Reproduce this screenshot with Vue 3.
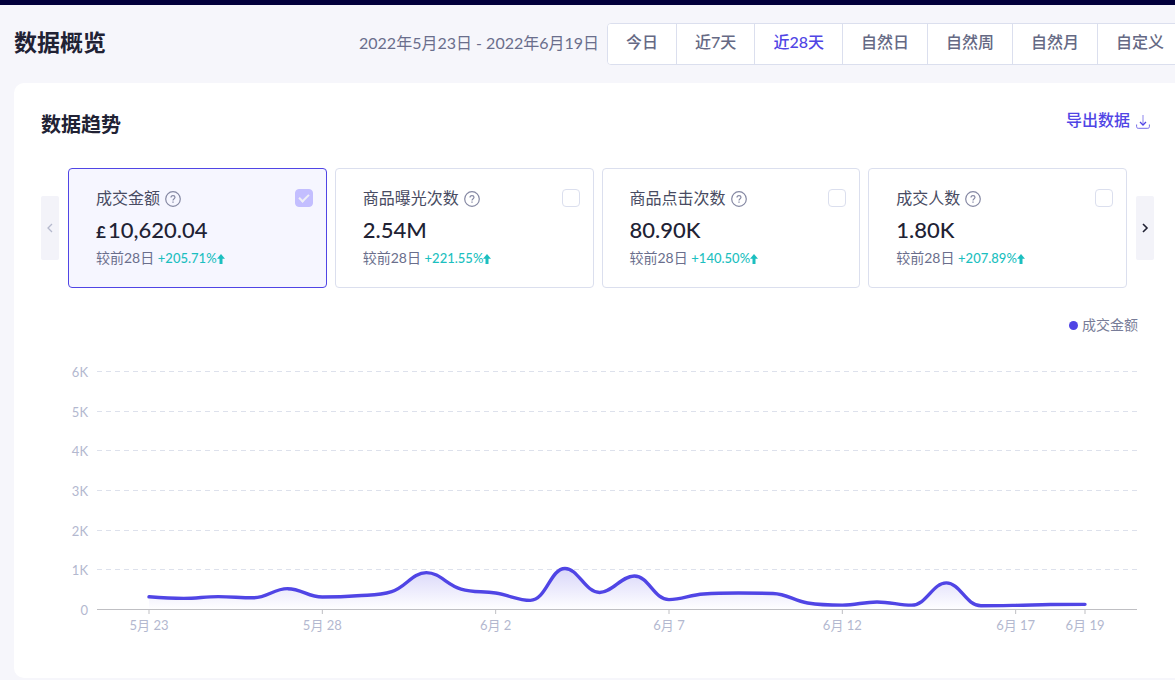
<script setup>
import { ref } from 'vue'

const ranges = ['今日', '近7天', '近28天', '自然日', '自然周', '自然月', '自定义']
const activeRange = ref('近28天')

const metrics = ref([
  { id: 'gmv', name: '成交金额', unit: '£', value: '10,620.04', change: '+205.71%', checked: true },
  { id: 'views', name: '商品曝光次数', unit: '', value: '2.54M', change: '+221.55%', checked: false },
  { id: 'clicks', name: '商品点击次数', unit: '', value: '80.90K', change: '+140.50%', checked: false },
  { id: 'buyers', name: '成交人数', unit: '', value: '1.80K', change: '+207.89%', checked: false },
])

const left = 56
const right = 1096
const base = 265
const rowStep = 119 / 3
const band = (right - left) / 30
const dayX = (i) => left + band * (i + 1.5)

const rows = [6, 5, 4, 3, 2, 1, 0].map((k) => ({
  label: k ? `${k}K` : '0',
  y: Math.round(base - k * rowStep) - 0.5,
}))

const days = [
  [0, '5月 23'], [5, '5月 28'], [10, '6月 2'], [15, '6月 7'],
  [20, '6月 12'], [25, '6月 17'], [27, '6月 19'],
].map(([i, label]) => ({ x: dayX(i), label }))

const amounts = [
  320, 280, 325, 295, 525, 315, 345, 450, 930, 515, 415, 230, 1035, 430,
  845, 250, 390, 415, 405, 165, 110, 190, 110, 670, 95, 105, 125, 130,
]

const smoothness = 0.4
const clamp = (v, a, b) => Math.max(Math.min(a, b), Math.min(Math.max(a, b), v))

function smoothPath(points) {
  let d = `M${points[0][0]} ${points[0][1]}`
  let out = points[0]
  for (let i = 1; i < points.length; i++) {
    const prev = points[i - 1]
    const p = points[i]
    const next = points[i + 1]
    let into = p
    let nextOut = p
    if (next) {
      const lenPrev = Math.hypot(p[0] - prev[0], p[1] - prev[1])
      const lenNext = Math.hypot(next[0] - p[0], next[1] - p[1])
      const ratio = lenNext / (lenNext + lenPrev)
      nextOut = [0, 1].map((k) => clamp(p[k] + (next[k] - prev[k]) * smoothness * ratio, p[k], next[k]))
      into = [0, 1].map((k) => clamp(p[k] - ((nextOut[k] - p[k]) * lenPrev) / lenNext, p[k], prev[k]))
      nextOut = [0, 1].map((k) => p[k] + ((p[k] - into[k]) * lenNext) / lenPrev)
    }
    d += `C${out[0]} ${out[1]} ${into[0]} ${into[1]} ${p[0]} ${p[1]}`
    out = nextOut
  }
  return d
}

const linePath = smoothPath(amounts.map((v, i) => [dayX(i), base - 0.5 - (v / 1000) * rowStep]))
const areaPath = `${linePath}L${dayX(27)} ${base}L${dayX(0)} ${base}Z`
</script>

<template>
  <div class="page">
    <header class="head">
      <h1>数据概览</h1>
      <span class="period">2022年5月23日 - 2022年6月19日</span>
      <div class="ranges" role="group" aria-label="日期范围">
        <button
          v-for="r in ranges"
          :key="r"
          type="button"
          :class="{ active: r === activeRange }"
          @click="activeRange = r"
        >{{ r }}</button>
      </div>
    </header>

    <main class="panel">
      <div class="panel-head">
        <h2>数据趋势</h2>
        <button type="button" class="export">
          导出数据
          <svg width="14" height="14" viewBox="0 0 14 14" fill="none" stroke="currentColor">
            <path d="M7 0v9" stroke-opacity=".65" />
            <path d="M4 7l3 3 3-3" stroke-width="1.3" />
            <path d="M.6 9.5v2.1c0 1 .6 1.7 1.7 1.7h9.4c1.1 0 1.7-.7 1.7-1.7V9.5" stroke-opacity=".8" />
          </svg>
        </button>
      </div>

      <section class="carousel">
        <button type="button" class="nav" disabled aria-label="上一页">
          <svg width="8" height="10" viewBox="0 0 8 10" fill="none" stroke="currentColor" stroke-width="1.3"><path d="M6 1L2 5l4 4" /></svg>
        </button>
        <div class="cards">
          <article v-for="m in metrics" :key="m.id" class="card" :class="{ selected: m.checked }">
            <div class="card-head">
              <label :for="m.id">{{ m.name }}</label>
              <svg class="help" width="16" height="16" viewBox="0 0 16 16" fill="none" stroke="currentColor">
                <circle cx="8" cy="8" r="7.3" stroke-width="1.2" />
                <path d="M6 6.5c0-1.2.8-1.9 2-1.9s2 .7 2 1.7c0 .8-.5 1.2-1.1 1.6-.6.4-.9.7-.9 1.5" stroke-width="1.2" />
                <path d="M8 10.5v1.2" stroke-width="1.3" />
              </svg>
              <input :id="m.id" v-model="m.checked" type="checkbox" />
            </div>
            <div class="value"><small v-if="m.unit">{{ m.unit }}</small>{{ m.value }}</div>
            <div class="compare">
              较前28日 <span>{{ m.change }}</span>
              <svg width="8" height="10" viewBox="0 0 8 10" fill="currentColor"><path d="M4 0l4 4.700H5.500V10h-3V4.700H0z" /></svg>
            </div>
          </article>
        </div>
        <button type="button" class="nav" aria-label="下一页">
          <svg width="8" height="10" viewBox="0 0 8 10" fill="none" stroke="currentColor" stroke-width="1.6"><path d="M2 1l4 4-4 4" /></svg>
        </button>
      </section>

      <div class="legend"><i></i>成交金额</div>

      <svg class="chart" viewBox="0 0 1113 292" role="img" aria-label="成交金额">
        <defs>
          <linearGradient id="fill" x1="0" y1="0" x2="0" y2="1">
            <stop offset="0" stop-color="#5045e5" stop-opacity=".22" />
            <stop offset="1" stop-color="#5045e5" stop-opacity="0" />
          </linearGradient>
        </defs>
        <g v-for="row in rows" :key="row.label">
          <text class="tick" x="47" :y="row.y + 5" text-anchor="end">{{ row.label }}</text>
          <line v-if="row.label !== '0'" class="rule" :x1="left" :x2="right" :y1="row.y" :y2="row.y" />
        </g>
        <path :d="areaPath" fill="url(#fill)" />
        <line class="axis" :x1="left" :x2="right" :y1="base - 0.5" :y2="base - 0.5" />
        <g v-for="day in days" :key="day.label">
          <line class="axis" :x1="day.x" :x2="day.x" :y1="base" :y2="base + 4" />
          <text class="tick" :x="day.x" :y="base + 20" text-anchor="middle">{{ day.label }}</text>
        </g>
        <path class="line" :d="linePath" stroke-width="3.4" />
      </svg>
    </main>
  </div>
</template>

<style>
body {
  background: #f6f6fb;
}
</style>

<style scoped>
* {
  box-sizing: border-box;
}
.page {
  overflow: hidden;
  border-top: 5px solid #02003c;
  padding-left: 14px;
  background: #f6f6fb;
  font-family: Lato, "Noto Sans CJK SC", sans-serif;
  font-size: 16px;
  line-height: 24px;
  color: #212234;
}
button {
  border: 0;
  padding: 0;
  font: inherit;
  color: inherit;
  cursor: pointer;
}
h1,
h2 {
  margin: 0;
  font-weight: 700;
}
h1 {
  padding-bottom: 4px;
  font-size: 23px;
  line-height: 34px;
}
h2 {
  font-size: 20px;
  line-height: 30px;
}
.head {
  display: flex;
  align-items: center;
  height: 78px;
  margin-right: -8px;
  white-space: nowrap;
}
.period {
  margin-left: auto;
  margin-right: 8px;
  padding-bottom: 2px;
  color: #6a6e8c;
}
.ranges {
  display: flex;
  height: 42px;
  border: 1px solid #dbdfee;
  border-radius: 4px;
  background: #fff;
  overflow: hidden;
}
.ranges button {
  padding: 0 18px 4px;
  background: #fff;
  font-weight: 500;
  color: #656984;
}
.ranges button + button {
  border-left: 1px solid #dbdfee;
}
.ranges button.active {
  color: #5045e5;
}
.panel {
  margin-bottom: 2px;
  padding: 26px 21px 41px 27px;
  border-radius: 10px 0 0 10px;
  background: #fff;
}
.panel-head {
  display: flex;
  justify-content: space-between;
  align-items: flex-start;
}
.export {
  display: flex;
  align-items: center;
  gap: 6px;
  margin: -1px 4px 0 0;
  background: none;
  font-weight: 500;
  color: #5045e5;
}
.export svg {
  margin-top: 4px;
}
.carousel {
  display: flex;
  align-items: center;
  gap: 9px;
  margin-top: 29px;
}
.nav {
  flex: none;
  display: flex;
  align-items: center;
  justify-content: center;
  width: 18px;
  height: 64px;
  border-radius: 2px;
  background: #f3f3f9;
}
.nav:disabled {
  color: #b5b9cd;
}
.cards {
  flex: 1;
  display: grid;
  grid-template-columns: repeat(4, 1fr);
  gap: 8px;
}
.card {
  padding: 17px 13px 17px 27px;
  border: 1px solid #dbdfee;
  border-radius: 4px;
}
.card.selected {
  border-color: #5045e5;
  background: #f6f6ff;
}
.card-head {
  display: flex;
  align-items: center;
  color: #484b62;
}
.help {
  margin: 2px 0 0 5px;
  color: #8588a3;
}
input {
  appearance: none;
  display: grid;
  place-items: center;
  width: 18px;
  height: 18px;
  margin: 0 0 0 auto;
  border: 1px solid #dbdfee;
  border-radius: 4px;
  background: #fff;
}
input:checked {
  border-color: #c3beff;
  background: #c3beff;
}
input:checked::before {
  content: "";
  width: 8px;
  height: 4px;
  margin-bottom: 2px;
  border: solid #efeff6;
  border-width: 0 0 2px 2px;
  transform: rotate(-45deg);
}
.value {
  display: flex;
  align-items: baseline;
  margin-top: 4px;
  font-size: 22px;
  line-height: 32px;
  font-weight: 500;
}
.value small {
  margin-right: 2px;
  font-size: 17px;
  line-height: 24px;
  font-weight: 700;
}
.compare {
  font-size: 14px;
  line-height: 24px;
  color: #6a6e8c;
}
.compare span,
.compare svg {
  color: #1cbfc0;
}
.compare span {
  font-size: 13px;
  font-weight: 500;
}
.compare svg {
  vertical-align: -1px;
}
.legend {
  display: flex;
  justify-content: flex-end;
  align-items: center;
  gap: 4px;
  margin: 25px 16px 0 0;
  font-size: 14px;
  color: #787c98;
}
.legend i {
  width: 9px;
  height: 9px;
  border-radius: 50%;
  background: #5045e5;
}
.chart {
  display: block;
  width: 100%;
  margin-top: 8px;
}
.tick {
  font-size: 13px;
  fill: #b3b8cf;
}
.rule {
  stroke: #dde1ec;
  stroke-dasharray: 5 4;
}
.axis {
  stroke: #bfbfc3;
}
.line {
  fill: none;
  stroke: #5045e5;
  stroke-linecap: round;
  stroke-linejoin: bevel;
}
</style>
